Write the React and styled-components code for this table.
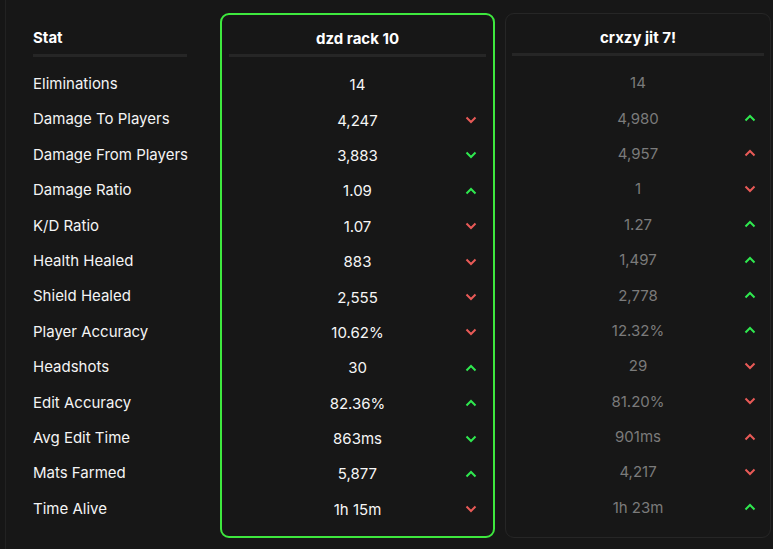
import React from "react";
import styled, { createGlobalStyle } from "styled-components";

const Global = createGlobalStyle`
  html, body { margin: 0; padding: 0; background: #161616; }
  body { font-family: Inter, "Noto Sans", sans-serif; color: #f2f2f2; }
`;

const Page = styled.div`
  width: 773px;
  height: 549px;
  box-sizing: border-box;
  margin-left: 5px;
  border-left: 1px solid #222222;
  background: #171717;
  display: flex;
  align-items: flex-start;
  padding: 13px 0 0 27px;
  overflow: hidden;
`;

const Column = styled.div`
  box-sizing: border-box;
  width: ${(p) => p.$w}px;
  margin-right: ${(p) => p.$mr || 0}px;
  height: 525px;
  border: ${(p) => (p.$bw ?? 1)}px solid ${(p) => p.$border || "transparent"};
  border-radius: 9px;
  padding: ${(p) => p.$pt ?? 12}px ${(p) => p.$px ?? 7}px 0;
  display: flex;
  flex-direction: column;
`;

const Header = styled.div`
  height: 22px;
  line-height: 22px;
  font-size: 15px;
  font-weight: 700;
  text-align: ${(p) => p.$align || "center"};
  color: #ffffff;
  margin-top: ${(p) => p.$mt || 0}px;
  padding-bottom: 5px;
  margin-bottom: ${(p) => p.$mb || 0}px;
`;

const Divider = styled.div`
  height: 3px;
  background: #262626;
  margin-bottom: ${(p) => p.$mb ?? 10}px;
`;

const Rows = styled.div`
  display: flex;
  flex-direction: column;
`;

const Row = styled.div`
  height: 35.4px;
  display: grid;
  grid-template-columns: 1fr auto 1fr;
  align-items: center;
`;

const Label = styled.div`
  height: 35.4px;
  line-height: 35.4px;
  font-size: 15px;
  color: #f4f4f4;
  white-space: nowrap;
`;

const Value = styled.div`
  grid-column: 2;
  font-size: 15px;
  color: ${(p) => (p.$muted ? "#7b7b7b" : "#f6f6f6")};
  white-space: nowrap;
`;

const RED = "#e85a57";
const GREEN = "#2fe84f";

const stats = [
  ["Eliminations", "14", null, "14", null],
  ["Damage To Players", "4,247", "d", "4,980", "u"],
  ["Damage From Players", "3,883", "dg", "4,957", "ur"],
  ["Damage Ratio", "1.09", "u", "1", "d"],
  ["K/D Ratio", "1.07", "d", "1.27", "u"],
  ["Health Healed", "883", "d", "1,497", "u"],
  ["Shield Healed", "2,555", "d", "2,778", "u"],
  ["Player Accuracy", "10.62%", "d", "12.32%", "u"],
  ["Headshots", "30", "u", "29", "d"],
  ["Edit Accuracy", "82.36%", "u", "81.20%", "d"],
  ["Avg Edit Time", "863ms", "dg", "901ms", "ur"],
  ["Mats Farmed", "5,877", "u", "4,217", "d"],
  ["Time Alive", "1h 15m", "d", "1h 23m", "u"],
];

const Arrow = styled.svg`
  grid-column: 3;
  justify-self: end;
  margin-right: ${(p) => p.$mr}px;
  display: block;
`;

function Dir({ code, mr }) {
  if (!code) return null;
  const up = code[0] === "u";
  let color = up ? GREEN : RED;
  if (code === "dg") color = GREEN;
  if (code === "ur") color = RED;
  return (
    <Arrow $mr={mr} width="12" height="8" viewBox="0 0 12 8">
      <path
        d={up ? "M1.5 6.5 L6 2 L10.5 6.5" : "M1.5 1.5 L6 6 L10.5 1.5"}
        fill="none"
        stroke={color}
        strokeWidth="2"
      />
    </Arrow>
  );
}

export default function App() {
  return (
    <>
      <Global />
      <Page>
        <Column $w={154} $mr={33} $px={0} $bw={0} $pt={14}>
          <Header $align="left">Stat</Header>
          <Divider $mb={9} />
          <Rows>
            {stats.map((s) => (
              <Label key={s[0]}>{s[0]}</Label>
            ))}
          </Rows>
        </Column>
        <Column $w={275} $mr={10} $bw={2} $border="#3ee83e" $px={7}>
          <Header $mt={1} $mb={-1}>dzd rack 10</Header>
          <Divider $mb={10} />
          <Rows>
            {stats.map((s) => (
              <Row key={s[0]}>
                <Value>{s[1]}</Value>
                <Dir code={s[2]} mr={9} />
              </Row>
            ))}
          </Rows>
        </Column>
        <Column $w={266} $border="#262626" $px={6} $pt={13}>
          <Header $mb={-1}>crxzy jit 7!</Header>
          <Divider $mb={9} />
          <Rows>
            {stats.map((s) => (
              <Row key={s[0]}>
                <Value $muted>{s[3]}</Value>
                <Dir code={s[4]} mr={8} />
              </Row>
            ))}
          </Rows>
        </Column>
      </Page>
    </>
  );
}
